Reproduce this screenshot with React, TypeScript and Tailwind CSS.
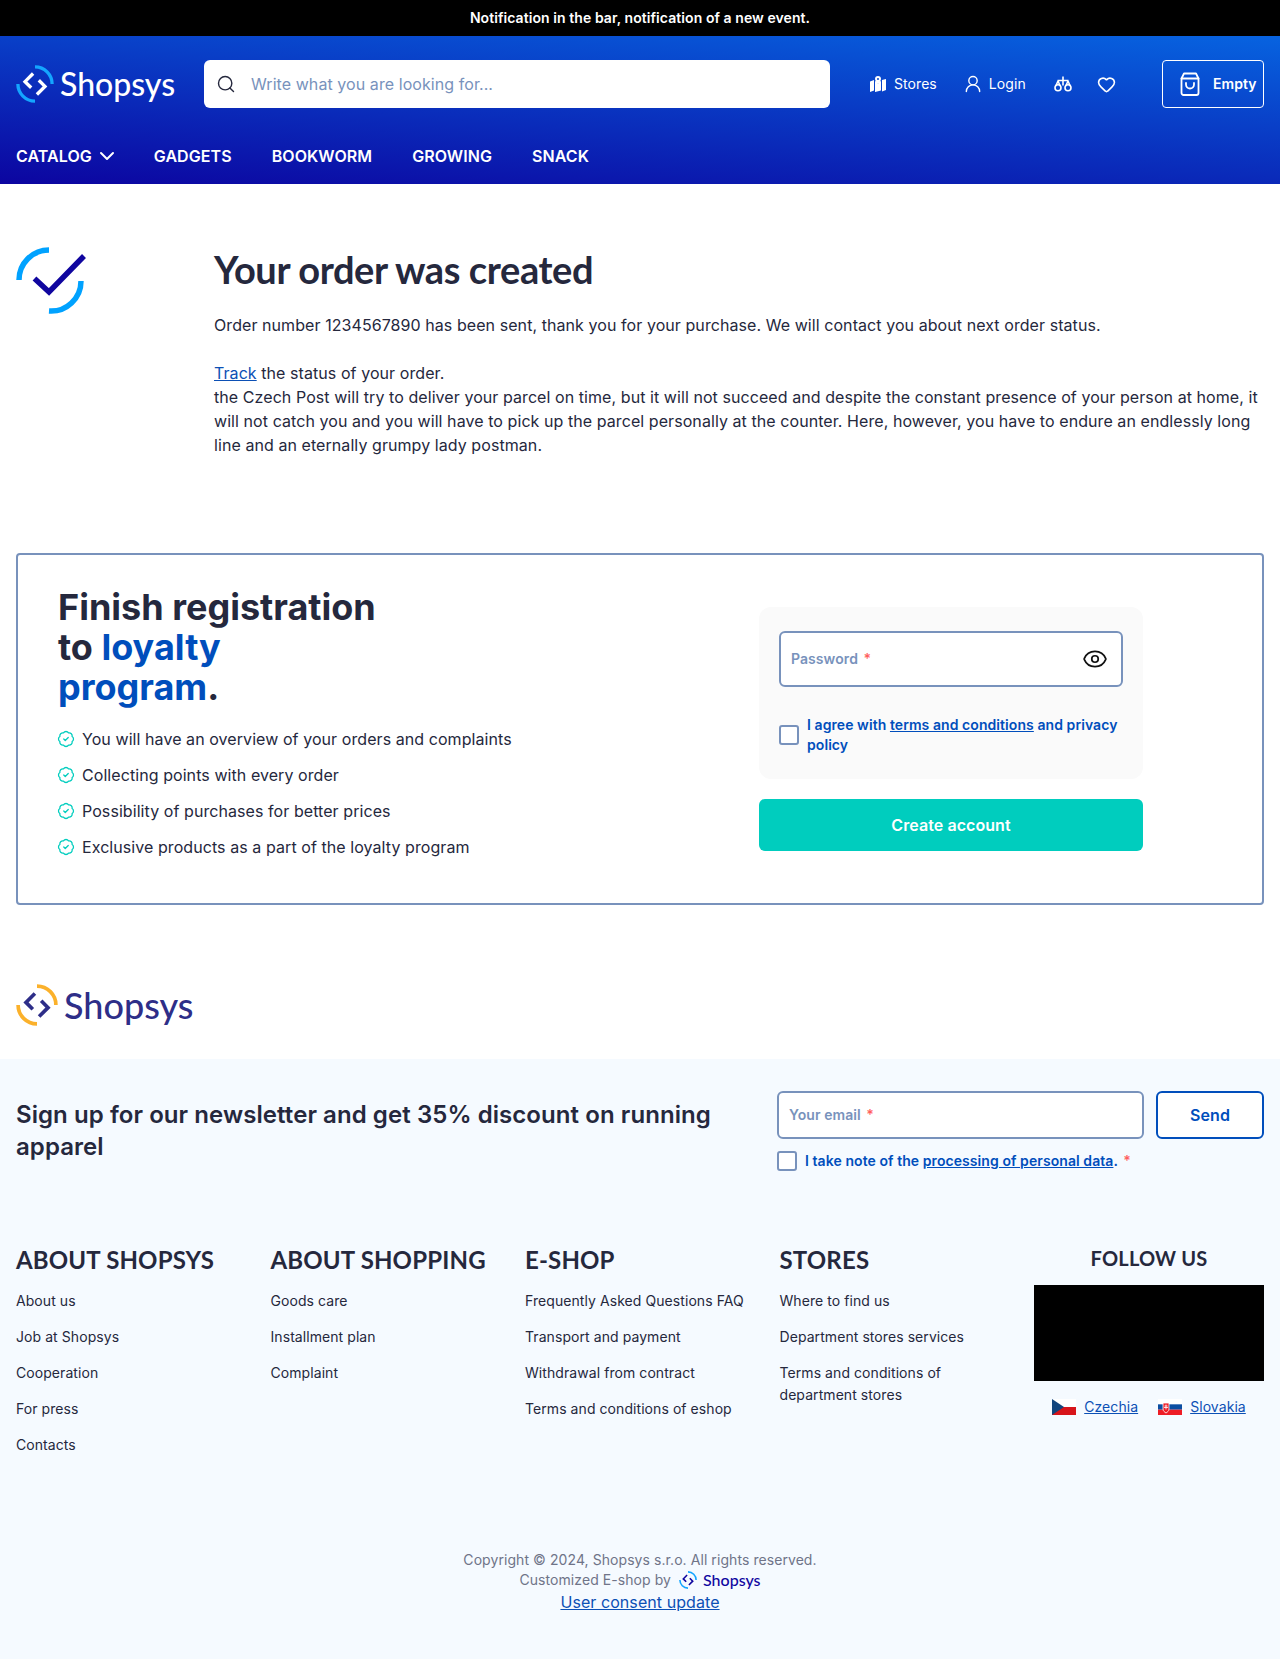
import { BadgeCheck, ChevronDown, Eye, Heart, Search, UserRound } from "lucide-react"

const sans = "font-['Inter',sans-serif]"
const heading = "font-['Lato',sans-serif]"

type LogoProps = {
    arc: string
    mark: string
    text: string
    size: number
    fontSize: string
}

function Logo({ arc, mark, text, size, fontSize }: LogoProps) {
    return (
        <div className="flex items-center gap-[6px]">
            <svg width={size} height={size} viewBox="0 0 40 40" fill="none">
                <path d="M20 2a18 18 0 0 1 18 18" stroke={arc} strokeWidth="3.500" />
                <path d="M20 38A18 18 0 0 1 2 20" stroke={arc} strokeWidth="3.500" />
                <path d="M18 9 9.500 17.500 16 24" stroke={mark} strokeWidth="3.500" />
                <path d="M24 16l6.500 6.500L22 31" stroke={mark} strokeWidth="3.500" />
            </svg>
            <span className={`font-['Lato',sans-serif] font-medium tracking-normal leading-none ${fontSize}`} style={{ color: text }}>Shopsys</span>
        </div>
    )
}

function ScalesIcon() {
    return (
        <svg width="18" height="18" viewBox="0 0 18 18" fill="none" stroke="white" strokeWidth="1.6">
            <path d="M9 1.500v9M3.500 5.500h11M4 6 1.800 11M4 6l2.200 5M14 6l-2.200 5M14 6l2.200 5" />
            <circle cx="4" cy="12.800" r="3" />
            <circle cx="14" cy="12.800" r="3" />
        </svg>
    )
}

function MapIcon() {
    return (
        <svg width="16" height="16" viewBox="0 0 16 16" fill="white">
            <path d="M0 5.500 4 4v10.500L0 16zM5 5l2 .8L8 8l1-2.200 2-.8v9.500l-6 1.500zM12 4l4-1v11l-4 1.500z" />
            <path fillRule="evenodd" d="M8 0a3 3 0 0 1 3 3c0 1.600-1.800 3.800-3 5.200C6.800 6.800 5 4.600 5 3a3 3 0 0 1 3-3m0 2a1 1 0 1 0 0 2 1 1 0 0 0 0-2" />
        </svg>
    )
}

function BagIcon() {
    return (
        <svg width="20" height="24" viewBox="0 0 20 24" fill="none" stroke="white" strokeWidth="1.800" strokeLinejoin="round" strokeLinecap="round">
            <path d="M1.500 6.500h17V21a2 2 0 0 1-2 2h-13a2 2 0 0 1-2-2z" />
            <path d="M1.500 6.500 4 1.500h12l2.500 5" />
            <path d="M6 11v1.500a4 4 0 0 0 8 0V11" />
        </svg>
    )
}

function CheckIcon() {
    return (
        <svg width="70" height="70" viewBox="0 0 70 70" fill="none">
            <path d="M33 3A30 30 0 0 0 3 33" stroke="#00a2ff" strokeWidth="5.500" />
            <path d="M65 34a30 30 0 0 1-32 30" stroke="#00a2ff" strokeWidth="5.500" />
            <path d="M18.500 31.500 33 45 68 9" stroke="#10069f" strokeWidth="5.500" />
        </svg>
    )
}

function CzechFlag() {
    return (
        <svg width="24" height="16" viewBox="0 0 24 16">
            <rect width="24" height="8" fill="#fff" />
            <rect y="8" width="24" height="8" fill="#d7141a" />
            <path d="M0 0l12 8-12 8z" fill="#11457e" />
        </svg>
    )
}

function SlovakFlag() {
    return (
        <svg width="24" height="16" viewBox="0 0 24 16">
            <rect width="24" height="5.330" fill="#fff" />
            <rect y="5.330" width="24" height="5.340" fill="#0b4ea2" />
            <rect y="10.670" width="24" height="5.330" fill="#ee1c25" />
            <path d="M5 4h6v6c0 2-1.500 3-3 4-1.500-1-3-2-3-4z" fill="#ee1c25" stroke="#fff" strokeWidth=".8" />
            <path d="M8 5.500v5M6.500 7h3M6 8.500h4" stroke="#fff" strokeWidth=".8" />
        </svg>
    )
}

const benefits = [
    "You will have an overview of your orders and complaints",
    "Collecting points with every order",
    "Possibility of purchases for better prices",
    "Exclusive products as a part of the loyalty program",
]

const footerColumns = [
    { title: "ABOUT SHOPSYS", links: ["About us", "Job at Shopsys", "Cooperation", "For press", "Contacts"] },
    { title: "ABOUT SHOPPING", links: ["Goods care", "Installment plan", "Complaint"] },
    { title: "E-SHOP", links: ["Frequently Asked Questions FAQ", "Transport and payment", "Withdrawal from contract", "Terms and conditions of eshop"] },
    { title: "STORES", links: ["Where to find us", "Department stores services", "Terms and conditions of department stores"] },
]

function Header() {
    return (
        <header className="h-[148px] bg-[linear-gradient(184deg,#0763e0,#0c05a0)] px-4 pt-6 text-white">
            <div className="flex h-12 items-center">
                <div className="w-[188px]">
                    <Logo arc="#14a5ff" mark="#ffffff" text="#ffffff" size={38} fontSize="text-[32px]" />
                </div>
                <div className="flex h-12 w-[626px] items-center gap-[15px] rounded-md bg-white pl-3">
                    <Search size={20} strokeWidth={1.7} className="text-[#25283d]" />
                    <span className="text-base text-[#7892bc]">Write what you are looking for...</span>
                </div>
                <div className="ml-[40px] flex items-center gap-2 text-sm">
                    <MapIcon />
                    <span>Stores</span>
                </div>
                <div className="ml-[26px] flex items-center gap-[6px] text-sm">
                    <UserRound size={20} strokeWidth={1.7} />
                    <span>Login</span>
                </div>
                <div className="ml-7">
                    <ScalesIcon />
                </div>
                <Heart size={19} strokeWidth={2} className="ml-[25px]" />
                <div className="ml-auto flex h-12 w-[102px] items-center gap-[13px] rounded border border-white pl-[17px] text-sm font-semibold">
                    <BagIcon />
                    <span>Empty</span>
                </div>
            </div>
            <nav className="mt-[36px] flex items-center gap-10 text-base leading-6 font-semibold">
                <div className="flex items-center gap-[3px]">
                    CATALOG
                    <ChevronDown size={24} strokeWidth={2} className="-mr-[5px]" />
                </div>
                <a>GADGETS</a>
                <a>BOOKWORM</a>
                <a>GROWING</a>
                <a>SNACK</a>
            </nav>
        </header>
    )
}

function OrderMessage() {
    return (
        <section className="flex px-4 pt-[63px]">
            <div className="w-[198px] shrink-0">
                <CheckIcon />
            </div>
            <div>
                <h1 className={`${heading} text-[38px] leading-[44px] font-bold tracking-[-0.4px]`}>Your order was created</h1>
                <p className="mt-[22px] text-base leading-6">Order number 1234567890 has been sent, thank you for your purchase. We will contact you about next order status.</p>
                <p className="mt-6 text-base leading-6">
                    <a className="text-[#0c50b5] underline">Track</a> the status of your order.
                    <br />
                    the Czech Post will try to deliver your parcel on time, but it will not succeed and despite the constant presence of your person at home, it will not catch you and you will have to pick up the parcel personally at the counter. Here, however, you have to endure an endlessly long line and an eternally grumpy lady postman.
                </p>
            </div>
        </section>
    )
}

function Registration() {
    return (
        <section className="mx-4 mt-[96px] flex h-[352px] rounded-sm border-2 border-[#7892bc] pt-[32px] pl-[40px]">
            <div className="w-[701px]">
                <h2 className="w-[322px] text-[36px] leading-10 font-bold tracking-normal">
                    Finish registration to <span className="text-[#004ebc]">loyalty program</span>.
                </h2>
                <ul className="mt-5 flex flex-col gap-3 text-base leading-6">
                    {benefits.map((benefit) => (
                        <li key={benefit} className="flex items-center gap-[6px]">
                            <BadgeCheck size={18} strokeWidth={1.7} className="-ml-px text-[#00cdbe]" />
                            <span className="ml-px">{benefit}</span>
                        </li>
                    ))}
                </ul>
            </div>
            <div className="mt-5 w-[384px]">
                <div className="h-[172px] rounded-xl bg-[#fafafa] px-5 pt-6">
                    <div className="flex h-14 items-center justify-between rounded-md border-2 border-[#7892bc] bg-white pr-[13px] pl-[10px]">
                        <span className="text-sm font-semibold text-[#7892bc]">Password <span className="ml-0.5 text-[#ff5f5f]">*</span></span>
                        <Eye size={26} strokeWidth={1.6} className="text-[#111]" />
                    </div>
                    <label className="mt-[28px] flex items-center gap-2 text-sm leading-5 font-semibold text-[#004ebc]">
                        <span className="size-5 shrink-0 rounded-[3px] border-2 border-[#7892bc] bg-white" />
                        <span>I agree with <a className="underline">terms and conditions</a> and privacy policy</span>
                    </label>
                </div>
                <button className="mt-5 h-[52px] w-full rounded-md bg-[#00cdbe] text-base font-semibold text-white">Create account</button>
            </div>
        </section>
    )
}

function Footer() {
    return (
        <footer className="mt-[33px]">
            <div className="flex h-[121px] items-start px-4 pt-[46px]">
                <Logo arc="#fbb12b" mark="#2e2e88" text="#2e2e88" size={42} fontSize="text-[36px]" />
            </div>
            <div className="h-[600px] bg-[#f5faff] px-4 pt-8">
                <div className="flex">
                    <h3 className="mt-2 w-[761px] pr-[40px] text-2xl leading-8 font-semibold">Sign up for our newsletter and get 35% discount on running apparel</h3>
                    <div className="grow">
                        <div className="flex gap-3">
                            <div className="flex h-12 grow items-center rounded-md border-2 border-[#7892bc] bg-white pl-[10px] text-sm font-semibold text-[#7892bc]">
                                <span>Your email <span className="ml-0.5 text-[#ff5f5f]">*</span></span>
                            </div>
                            <button className="h-12 w-[108px] rounded-md border-2 border-[#004ebc] bg-white text-base font-semibold text-[#004ebc]">Send</button>
                        </div>
                        <label className="mt-3 flex items-center gap-2 text-sm font-semibold text-[#004ebc]">
                            <span className="size-5 rounded-[3px] border-2 border-[#7892bc] bg-white" />
                            <span>I take note of the <a className="underline">processing of personal data</a>. <span className="ml-0.5 text-[#ff5f5f]">*</span></span>
                        </label>
                    </div>
                </div>
                <div className="mt-[73px] flex">
                    {footerColumns.map((column) => (
                        <div key={column.title} className="w-[254.500px] pr-[30px]">
                            <h4 className={`${heading} text-2xl leading-8 font-bold tracking-[0.16px] whitespace-nowrap`}>{column.title}</h4>
                            <ul className="mt-[14px] flex flex-col gap-[14px] text-sm leading-[22px]">
                                {column.links.map((link) => (
                                    <li key={link}>{link}</li>
                                ))}
                            </ul>
                        </div>
                    ))}
                    <div className="w-[230px]">
                        <h4 className={`${heading} -mt-[2px] text-center text-[20px] leading-8 font-bold tracking-[0.2px]`}>FOLLOW US</h4>
                        <div className="mt-[11px] h-24 bg-black" />
                        <div className="mt-4 flex justify-center gap-5 text-sm leading-5 text-[#0c50b5]">
                            <div className="flex items-center gap-2">
                                <CzechFlag />
                                <a className="underline">Czechia</a>
                            </div>
                            <div className="flex items-center gap-2">
                                <SlovakFlag />
                                <a className="underline">Slovakia</a>
                            </div>
                        </div>
                    </div>
                </div>
                <div className="mt-[94px] flex flex-col items-center text-sm leading-5 text-[#6f7488]">
                    <p>Copyright © 2024, Shopsys s.r.o. All rights reserved.</p>
                    <div className="flex items-center gap-2">
                        Customized E-shop by
                        <Logo arc="#14a5ff" mark="#10069f" text="#10069f" size={18} fontSize="text-[16px]" />
                    </div>
                    <a className="text-base leading-6 text-[#0c50b5] underline">User consent update</a>
                </div>
            </div>
        </footer>
    )
}

export default function App() {
    return (
        <div className={`${sans} min-h-[1659px] bg-white tracking-[0.07px] text-[#25283d]`}>
            <div className="flex h-9 items-center justify-center bg-black text-sm font-semibold text-white">Notification in the bar, notification of a new event.</div>
            <Header />
            <OrderMessage />
            <Registration />
            <Footer />
        </div>
    )
}
